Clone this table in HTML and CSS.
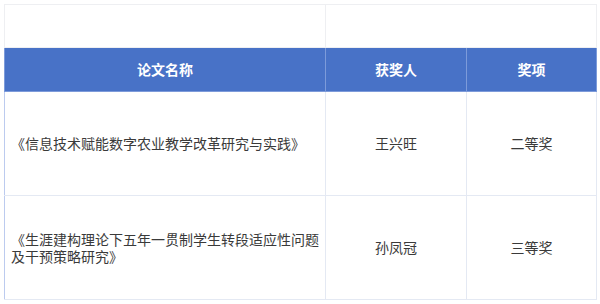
FILE: index.html
```html
<!DOCTYPE html>
<html lang="zh">
<head>
<meta charset="utf-8">
<link rel="stylesheet" href="styles.css">
</head>
<body>
<table class="awards">
  <colgroup>
    <col class="c-title">
    <col class="c-name">
    <col class="c-prize">
  </colgroup>
  <tr class="blank">
    <td></td>
    <td colspan="2"></td>
  </tr>
  <tr class="head">
    <th>论文名称</th>
    <th>获奖人</th>
    <th>奖项</th>
  </tr>
  <tr class="row">
    <td class="title">《信息技术赋能数字农业教学改革研究与实践》</td>
    <td>王兴旺</td>
    <td>二等奖</td>
  </tr>
  <tr class="row">
    <td class="title">《生涯建构理论下五年一贯制学生转段适应性问题及干预策略研究》</td>
    <td>孙凤冠</td>
    <td>三等奖</td>
  </tr>
</table>
</body>
</html>
```

FILE: styles.css
```css
html, body {
  margin: 0;
  padding: 0;
  background: #ffffff;
}
body {
  padding: 4px 4px 0 4px;
  font-family: "Noto Sans CJK SC", "Noto Sans", sans-serif;
}
.awards {
  border-collapse: collapse;
  table-layout: fixed;
  width: 592px;
}
.c-title { width: 321px; }
.c-name { width: 141px; }
.c-prize { width: 130px; }
.awards td, .awards th {
  border: 1px solid #e4e9f3;
  padding: 0 6px;
  text-align: center;
  vertical-align: middle;
  font-size: 14px;
  line-height: 17px;
  color: #3a3a3a;
  font-weight: 400;
}
.blank td {
  height: 42px;
  border-color: #eeeff2;
}
.head th {
  height: 43px;
  background: #4872c7;
  color: #ffffff;
  font-weight: 700;
  border-color: #7d9bda;
}
.row td {
  height: 103px;
}
.row td:first-child {
  border-left-color: #bccbef;
}
.row td.title {
  text-align: left;
}
```
